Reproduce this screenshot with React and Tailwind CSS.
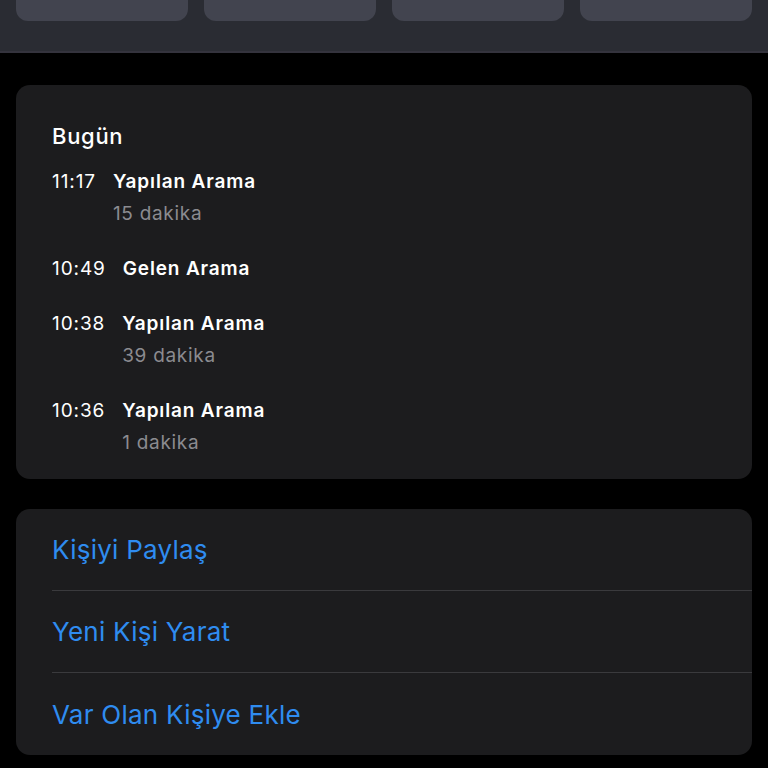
export default function App() {
  const calls = [
    { t: "11:17", l: "Yapılan Arama", d: "15 dakika" },
    { t: "10:49", l: "Gelen Arama" },
    { t: "10:38", l: "Yapılan Arama", d: "39 dakika" },
    { t: "10:36", l: "Yapılan Arama", d: "1 dakika" },
  ];
  const actions = ["Kişiyi Paylaş", "Yeni Kişi Yarat", "Var Olan Kişiye Ekle"];
  return (
    <div className="w-[768px] h-[768px] bg-black overflow-hidden" style={{ fontFamily: "Inter, 'Noto Sans', sans-serif" }}>
      <div className="h-[53px] bg-[#2a2c33] border-b-2 border-[#34333d] px-4 grid grid-cols-4 gap-4 items-start">
        {[0, 1, 2, 3].map((i) => (
          <div key={i} className="h-[21px] bg-[#42444f] rounded-b-[12px]" />
        ))}
      </div>
      <div className="px-4 pt-[32px] flex flex-col gap-[30px]">
        <div className="bg-[#1c1c1e] rounded-[14px] pl-[36px] pt-[36px] pb-[20px] text-white">
          <div className="text-[22px] leading-[30px] font-medium mb-[15px] tracking-[0.7px]">Bugün</div>
          <div className="flex flex-col gap-[23px]">
            {calls.map((c, i) => (
              <div key={i} className="flex gap-[17px]">
                <div className="text-[19px] leading-[32px] tracking-[0.9px]">{c.t}</div>
                <div className="flex flex-col">
                  <div className="text-[19px] leading-[32px] font-semibold tracking-[0.85px]">{c.l}</div>
                  {c.d && <div className="text-[19px] leading-[32px] text-[#8b8b90] tracking-[0.7px]">{c.d}</div>}
                </div>
              </div>
            ))}
          </div>
        </div>
        <div className="bg-[#1c1c1e] rounded-[14px] pl-[36px]">
          {actions.map((a, i) => (
            <div key={i} className={"h-[82px] flex items-center text-[26px] tracking-[0.25px] text-[#2f8cf0] " + (i < 2 ? "border-b border-[#3a3a3d]" : "")}>
              {a}
            </div>
          ))}
        </div>
      </div>
    </div>
  );
}
